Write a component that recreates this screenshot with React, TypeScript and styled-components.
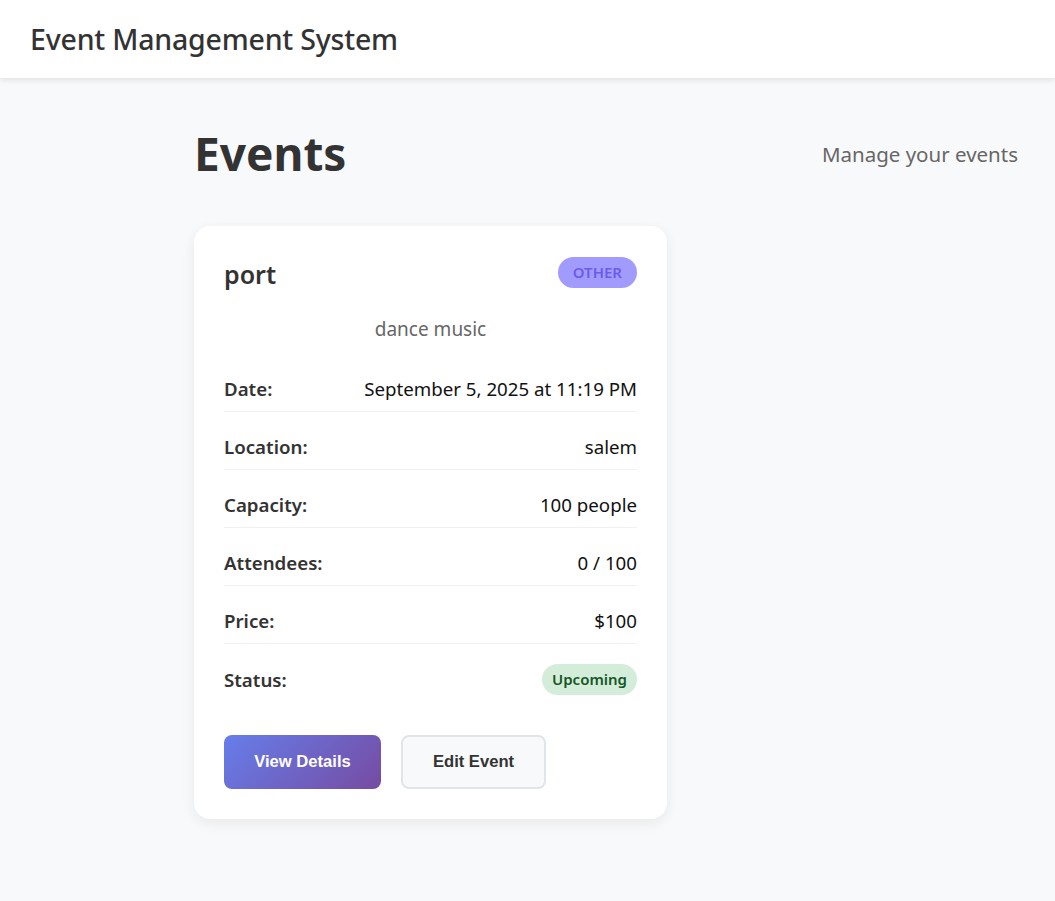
import React from "react";
import styled, { createGlobalStyle } from "styled-components";

const GlobalStyle = createGlobalStyle`
  * { box-sizing: border-box; }
  html, body { margin: 0; padding: 0; }
  body {
    background: #f8f9fa;
    font-family: "Noto Sans", "Open Sans", sans-serif;
    color: #333;
  }
`;

const Page = styled.div`
  min-height: 901px;
  background: #f8f9fa;
`;

const TopBar = styled.header`
  height: 78px;
  background: #fff;
  box-shadow: 0 2px 6px rgba(0, 0, 0, 0.1);
  display: flex;
  align-items: center;
  padding: 0 30px;
`;

const Brand = styled.h1`
  margin: 0;
  font-size: 28.5px;
  font-weight: 500;
  color: #333;
  letter-spacing: -0.2px;
`;

const Main = styled.main`
  padding: 46px 37px 40px 194px;
`;

const PageHead = styled.div`
  display: flex;
  justify-content: space-between;
  align-items: center;
  margin-bottom: 42px;
`;

const PageTitle = styled.h2`
  margin: 0;
  font-size: 46px;
  font-weight: 700;
  color: #333;
  line-height: 1.3;
`;

const Subtitle = styled.p`
  margin: 0;
  font-size: 20.5px;
  color: #666;
`;

const Grid = styled.div`
  display: grid;
  grid-template-columns: 473px;
`;

const Card = styled.article`
  background: #fff;
  border-radius: 16px;
  padding: 30px 30px 30px;
  box-shadow: 0 4px 14px rgba(0, 0, 0, 0.07);
`;

const CardHead = styled.div`
  display: flex;
  justify-content: space-between;
  align-items: flex-start;
  padding-top: 1px;
  margin-bottom: 24px;
`;

const CardTitle = styled.h3`
  margin: 0;
  padding-top: 2px;
  font-size: 25px;
  font-weight: 600;
  color: #333;
  line-height: 31px;
`;

const Pill = styled.span<{ $bg: string; $fg: string; $pad: number; $upper?: boolean }>`
  display: inline-flex;
  align-items: center;
  justify-content: center;
  height: 31px;
  padding: 0 ${(p) => p.$pad}px;
  border-radius: 16px;
  background: ${(p) => p.$bg};
  color: ${(p) => p.$fg};
  font-size: 15px;
  font-weight: 600;
  text-transform: ${(p) => (p.$upper ? "uppercase" : "none")};
`;

const Description = styled.p`
  margin: 0 0 22px;
  text-align: center;
  color: #666;
  font-size: 19px;
  line-height: 1.6;
`;

const Row = styled.div<{ $last?: boolean }>`
  display: flex;
  justify-content: space-between;
  align-items: center;
  padding: ${(p) => (p.$last ? "8px 0 10px" : "10px 0")};
  margin-bottom: 12px;
  border-bottom: ${(p) => (p.$last ? "none" : "1px solid #f0f0f0")};
  font-size: 18.7px;
  line-height: 25px;
`;

const Label = styled.span`
  font-weight: 600;
  color: #333;
`;

const Value = styled.span`
  color: #111;
`;

const Actions = styled.div`
  display: flex;
  gap: 20px;
  margin-top: 30px;
`;

const Button = styled.button<{ $primary?: boolean }>`
  height: 54px;
  padding: 0;
  border-radius: 8px;
  font-family: "Liberation Sans", Arial, sans-serif;
  font-size: 16.6px;
  font-weight: 700;
  cursor: pointer;
  border: ${(p) => (p.$primary ? "none" : "2px solid #e1e5e9")};
  background: ${(p) =>
    p.$primary ? "linear-gradient(135deg, #667eea 0%, #764ba2 100%)" : "#f8f9fa"};
  color: ${(p) => (p.$primary ? "#fff" : "#333")};
  width: ${(p) => (p.$primary ? "157px" : "145px")};
`;

const rows: { label: string; value: string }[] = [
  { label: "Date:", value: "September 5, 2025 at 11:19 PM" },
  { label: "Location:", value: "salem" },
  { label: "Capacity:", value: "100 people" },
  { label: "Attendees:", value: "0 / 100" },
  { label: "Price:", value: "$100" },
];

export default function App() {
  return (
    <Page>
      <GlobalStyle />
      <TopBar>
        <Brand>Event Management System</Brand>
      </TopBar>
      <Main>
        <PageHead>
          <PageTitle>Events</PageTitle>
          <Subtitle>Manage your events</Subtitle>
        </PageHead>
        <Grid>
          <Card>
            <CardHead>
              <CardTitle>port</CardTitle>
              <Pill $bg="#a29bfe" $fg="#6c5ce7" $pad={15} $upper>
                Other
              </Pill>
            </CardHead>
            <Description>dance music</Description>
            {rows.map((r) => (
              <Row key={r.label}>
                <Label>{r.label}</Label>
                <Value>{r.value}</Value>
              </Row>
            ))}
            <Row $last>
              <Label>Status:</Label>
              <Pill $bg="#d4edda" $fg="#155724" $pad={10}>
                Upcoming
              </Pill>
            </Row>
            <Actions>
              <Button $primary>View Details</Button>
              <Button>Edit Event</Button>
            </Actions>
          </Card>
        </Grid>
      </Main>
    </Page>
  );
}
